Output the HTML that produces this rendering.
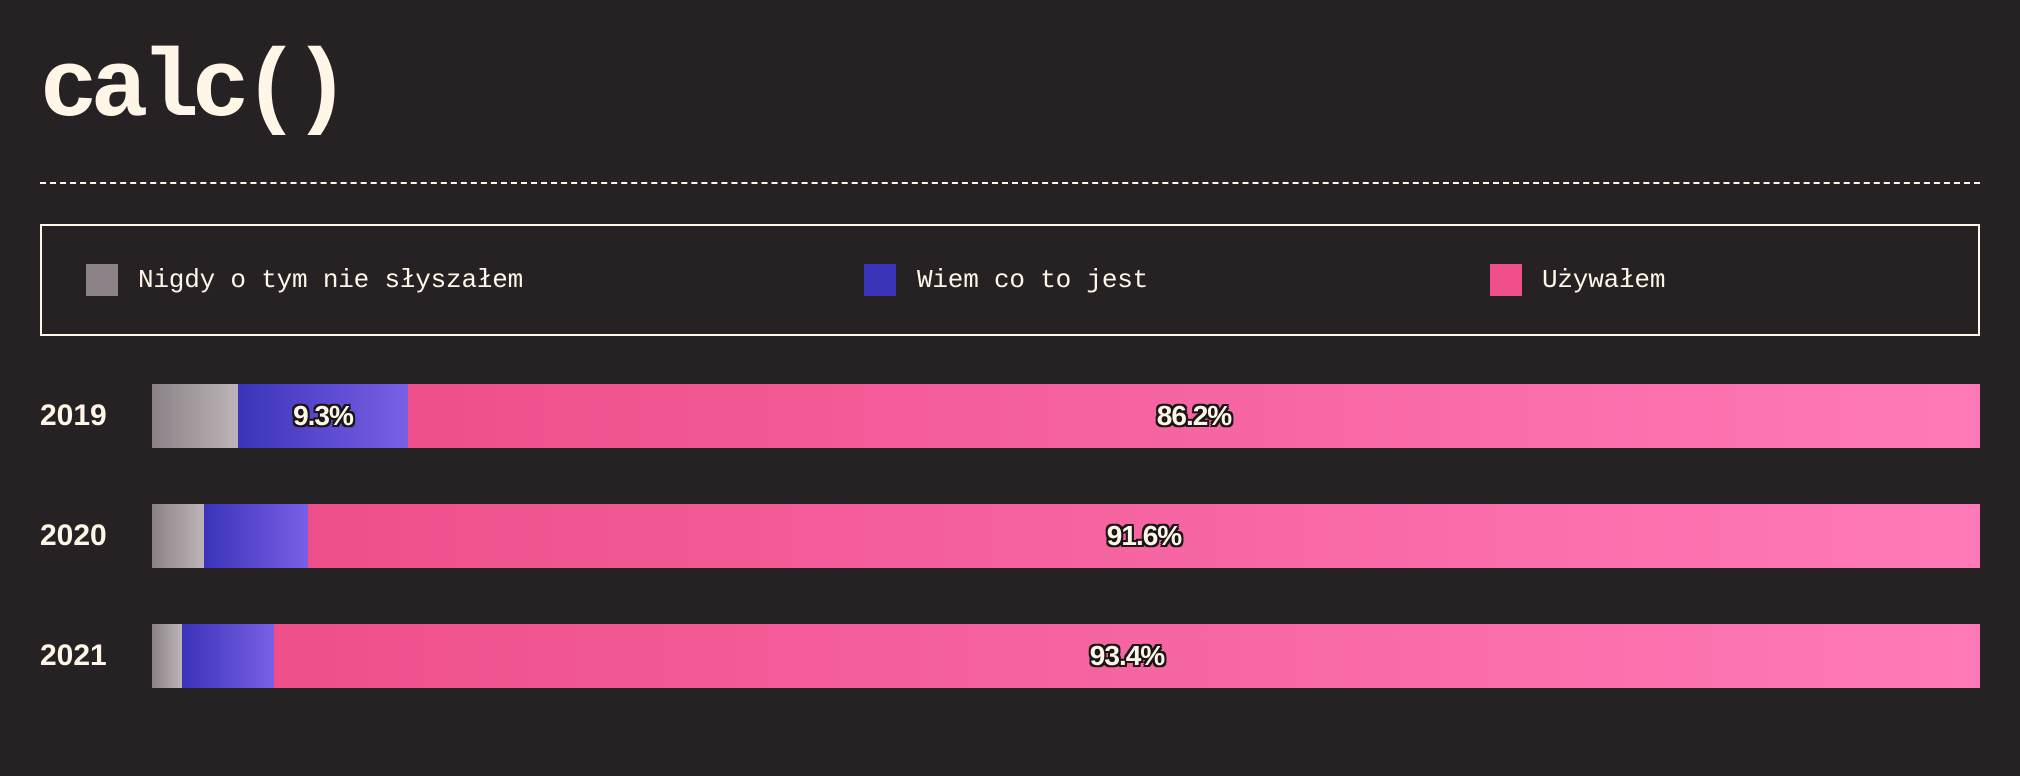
<!DOCTYPE html>
<html><head><meta charset="utf-8"><style>
body{margin:0;width:2020px;height:776px;background:#262223;overflow:hidden;font-family:"Liberation Mono",monospace;color:#fff6e8;position:relative}
.t{position:absolute;left:40px;top:30px;font-size:96px;font-weight:bold;letter-spacing:-7px;line-height:120px}
.dash{position:absolute;left:40px;width:1940px;top:182px;border-top:2px dashed #fff6e8}
.leg{position:absolute;left:40px;top:224px;width:1936px;height:108px;border:2px solid #fff6e8}
.sw{position:absolute;top:264px;width:32px;height:32px}
.lt{position:absolute;top:263px;font-size:26px;line-height:34px;letter-spacing:-0.2px}
.yr{position:absolute;left:40px;font-size:30px;font-weight:bold;font-family:"Liberation Sans",sans-serif;letter-spacing:0px}
.bar{position:absolute;left:152px;width:1828px;height:64px;display:flex}
.g{background:linear-gradient(90deg,#8a8286,#bcb4b6)}
.b{background:linear-gradient(90deg,#3a34b8,#7a5fe6)}
.p{background:linear-gradient(90deg,#ee4f8a,#ff7ab8);flex:1}
.bar>div{display:flex;align-items:center;justify-content:center;font-family:"Liberation Sans",sans-serif;font-weight:bold;font-size:28px;color:#fff6e8;letter-spacing:-1px;text-shadow:2px 0 #1a1617,-2px 0 #1a1617,0 2px #1a1617,0 -2px #1a1617,2px 2px #1a1617,-2px -2px #1a1617,2px -2px #1a1617,-2px 2px #1a1617}
</style></head><body>
<div class="t">calc()</div>
<div class="dash"></div>
<div class="leg"></div>
<div class="sw" style="left:86px;background:#8a8286"></div><div class="lt" style="left:138px">Nigdy o tym nie słyszałem</div>
<div class="sw" style="left:864px;background:#3a34b8"></div><div class="lt" style="left:917px">Wiem co to jest</div>
<div class="sw" style="left:1490px;background:#ee4f8a"></div><div class="lt" style="left:1542px">Używałem</div>
<div class="yr" style="top:399px">2019</div>
<div class="bar" style="top:384px"><div class="g" style="width:86px"></div><div class="b" style="width:170px">9.3%</div><div class="p">86.2%</div></div>
<div class="yr" style="top:519px">2020</div>
<div class="bar" style="top:504px"><div class="g" style="width:52px"></div><div class="b" style="width:104px"></div><div class="p">91.6%</div></div>
<div class="yr" style="top:639px">2021</div>
<div class="bar" style="top:624px"><div class="g" style="width:30px"></div><div class="b" style="width:92px"></div><div class="p">93.4%</div></div>
</body></html>
